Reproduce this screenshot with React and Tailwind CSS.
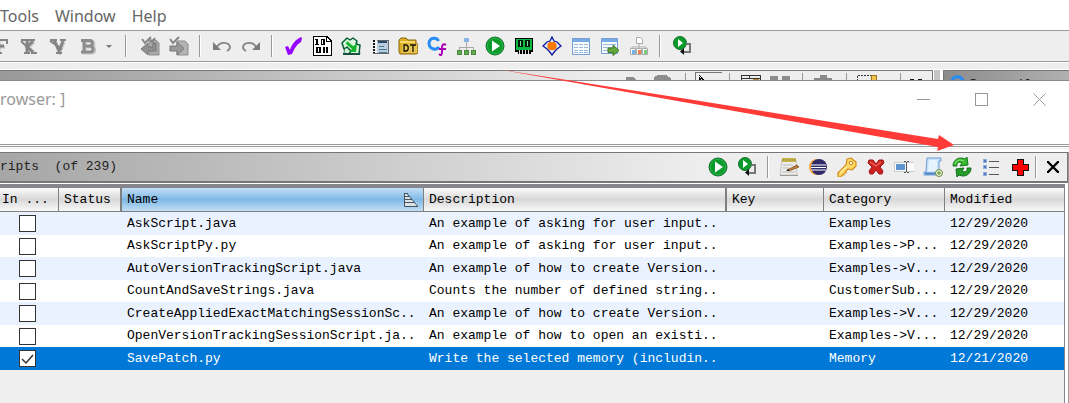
import React from "react";

const Svg = ({ children, crisp }) => (
  <svg
    viewBox="0 0 20 20"
    className="h-5 w-5 shrink-0"
    fill="none"
    aria-hidden="true"
    shapeRendering={crisp ? "crispEdges" : "auto"}
  >
    {children}
  </svg>
);

const LetterIcon = ({ d, serif }) => (
  <Svg>
    <path d={d} stroke="#c4c4c4" strokeWidth="3" transform="translate(1 1)" />
    <path d={d} stroke="#858585" strokeWidth="3" />
    <path d={serif} stroke="#858585" strokeWidth="2" />
  </Svg>
);
const FIcon = () => <LetterIcon d="M8 17V4M8 10h6" serif="M4 4h13v4M4 17h8M3 5l4 4" />;
const KIcon = () => <LetterIcon d="M8 4v13M14 5l-6 6 6 5" serif="M2 4h14M5 17h6M12 17h6M2 5l5 5" />;
const VIcon = () => <LetterIcon d="M6 4l5 11 4-10" serif="M2 4h7M12 4h6M8 17h6M2 5l12 8" />;
const BIcon = () => (
  <Svg>
    <path d="M4 4.500h9c4 0 4 5 0 5.500h-5 5c5 0 5 6 0 6H4M7 4v12" stroke="#c6c6c6" strokeWidth="3" transform="translate(1 1)" />
    <path d="M4 4.500h9c3 0 3 5 0 5.500H8h5c4 0 4 6 0 6H4M7 4v12" stroke="#8d8d8d" strokeWidth="3" />
  </Svg>
);
const PrevPatch = () => (
  <Svg>
    <path d="M9 4h7l3 3v12H9z" fill="#aaa" stroke="#8d8d8d" />
    <path d="M1 13l7-6v4h5V7h3v8H8v4z" fill="#909090" stroke="#777" />
    <path d="M2 3l3 4 6-6M10 4l2 2 3-4" stroke="#858585" strokeWidth="2" />
  </Svg>
);
const NextPatch = () => (
  <Svg>
    <path d="M8 5h8l3 3v11H8z" fill="#b3b3b3" stroke="#8d8d8d" />
    <path d="M1 10h7V6l7 6.500L8 19v-4H1z" fill="#999" stroke="#777" />
    <path d="M1 3l3 4 6-6" stroke="#858585" strokeWidth="2" />
  </Svg>
);
const UndoIcon = () => (
  <Svg>
    <path d="M5 11c3-6 12-5 13 0 0 2-1 3-3 4" stroke="#858585" strokeWidth="1.800" />
    <path d="M1 6v8h8z" fill="#7c7c7c" />
  </Svg>
);
const RedoIcon = () => (
  <Svg>
    <path d="M15 11C12 5 3 6 2 11c0 2 1 3 3 4" stroke="#858585" strokeWidth="1.800" />
    <path d="M19 6v8h-8z" fill="#7c7c7c" />
  </Svg>
);
const PurpleCheck = () => (
  <Svg>
    <path d="M2 11l3-1 2 4C9 8 12 4 18 1l1 1-1 4c-4 2-7 7-9 12l-4 1z" fill="#9500ff" />
  </Svg>
);
const BinaryIcon = () => (
  <Svg crisp>
    <path d="M1 0h14l5 5v15H1z" fill="#000" />
    <path d="M2 1h12v5h5v13H2z" fill="#fff" />
    <path d="M15 2l3 3h-3z" fill="#fff" />
    <path d="M3 3h3v5h1v1H3V8h1V4H3zM9 3h4v6H9zM4 11h5v6H4zM11 11h2v6h-2zM14 11h2v6h-2z" fill="#000" />
    <path d="M10 4h1v4h-1zM6 12h1v4H6z" fill="#fff" />
  </Svg>
);
const GreenArrow = () => (
  <Svg>
    <path d="M4 8h13l2 10H3z" fill="#d3f2d6" stroke="#3d8c6a" />
    <path d="M1 7l5-5 3 2 3-2 4 3-1 3 4 1-1 9H8l2-3-4-4-3 2z" fill="#d9f7da" stroke="#075c35" strokeWidth="1.500" strokeLinejoin="round" />
    <path d="M6 5l6 5 4-2-1 8H8l3-3-6-5z" fill="#15b52c" />
    <path d="M2 18h17" stroke="#174f40" strokeWidth="2" />
  </Svg>
);
const ListingIcon = () => (
  <Svg crisp>
    <path d="M3 4h15v13H3z" fill="#b9cddd" stroke="#666" />
    <path d="M3 4h4v13H3z" fill="#f4f4f4" />
    <path d="M4 4v13" stroke="#111" strokeWidth="2" strokeDasharray="2 1" />
    <path d="M8 6h9" stroke="#27466b" strokeWidth="2" />
    <path d="M9 10h5M9 13h8M9 16h8" stroke="#4e7891" />
  </Svg>
);
const DataTypeIcon = () => (
  <Svg>
    <path d="M1 16V4l2-2h5l2 2h8v4h2v9l-2 1H2z" fill="#dcae25" stroke="#8b6710" />
    <path d="M2 6h15" stroke="#ffe884" strokeWidth="1.500" />
    <path d="M4 8h15v9H4z" fill="#e6c654" />
    <path d="M6 9v6h2c3 0 3-6 0-6zM12 9h6M15 9v7" stroke="#171200" strokeWidth="1.300" />
  </Svg>
);
const FunctionIcon = () => (
  <Svg>
    <path d="M11.500 5C10 1 3 1 2 7c0 6 7 8 10 4" stroke="#278cf4" strokeWidth="3" />
    <path d="M19 9c-3-2-4 0-4 3v4c0 3-1 4-3 2M12 13h7" stroke="#aa00b5" strokeWidth="2" />
  </Svg>
);
const TreeIcon = () => (
  <Svg crisp>
    <path d="M10 6v5M3 14v-3h14v3M10 11v3" stroke="#aaa" />
    <path d="M8 2h5v4H8z" fill="#8ab5e4" />
    <path d="M1 14h4v4H1zM8 14h4v4H8zM15 14h4v4h-4z" fill="#62a94f" stroke="#488a38" />
  </Svg>
);
const RunIcon = () => (
  <Svg>
    <circle cx="10" cy="10" r="9" fill="#0a9b2b" stroke="#16712c" strokeWidth="1" />
    <circle cx="10" cy="10" r="7.700" stroke="#23b547" />
    <path d="M7 4.500v11l8-5.500z" fill="#fff" />
  </Svg>
);
const ChipIcon = () => (
  <Svg crisp>
    <path d="M1 2h18v14h-2v2H4v-2H1z" fill="#000" />
    <path d="M2 3h16v11H2z" fill="#0bbb46" />
    <path d="M4 4h5v7H4zM11 4h5v7h-5z" fill="#001a08" />
    <path d="M6 5h1v5H6zM13 5h1v5h-1z" fill="#71ef98" />
    <path d="M5 14v4M8 14v4M11 14v4M14 14v4" stroke="#ddd" />
  </Svg>
);
const DiamondIcon = () => (
  <Svg>
    <path d="M10 1l2 4 3 1 4 4-4 3-2 2-3 4-3-4-2-2-4-3 4-4 3-1z" fill="#dceaff" stroke="#111a9c" strokeWidth="1.300" />
    <path d="M7.500 6h5l2 2v4l-2 2h-5l-2-2V8z" fill="#ff7900" />
  </Svg>
);
const SheetIcon = () => (
  <Svg crisp>
    <path d="M1 2h17v16H1z" fill="#f5fbff" stroke="#759fd3" />
    <path d="M2 3h16v3H2z" fill="#78aae6" />
    <path d="M3 8h14M3 11h14M3 14h14M3 16h14" stroke="#9db8d6" />
    <path d="M7 7v10M12 7v10" stroke="#fff" />
  </Svg>
);
const SheetExport = () => (
  <Svg>
    <path d="M1.500 2.500h16v15h-16z" fill="#f5fbff" stroke="#759fd3" />
    <path d="M2 3h15v3H2z" fill="#78aae6" />
    <path d="M3 8.500h13M3 11.500h13M3 14.500h8" stroke="#9db8d6" />
    <path d="M8 12h5V9l6 5.500-6 5v-3H8z" fill="#65a939" stroke="#3e762b" />
  </Svg>
);
const ProgramTree = () => (
  <Svg>
    <path d="M7.500 1.500h4l2 2v4h-6zM10 8v3M3 13v-2h14v2M10 11v2" fill="#fff" stroke="#aaa" />
    <path d="M1.500 12.500h5v6h-5zM7.500 12.500h5v6h-5zM13.500 12.500h5v6h-5z" fill="#fff" stroke="#aaa" />
    <path d="M3 14h3v4H3z" fill="#6cb5ed" />
    <path d="M9 14h3v4H9z" fill="#f17d4d" />
    <path d="M15 14h3v4h-3z" fill="#76cc78" />
  </Svg>
);
const RerunIcon = () => (
  <Svg>
    <circle cx="8" cy="7" r="6.500" fill="#0a9b2b" stroke="#16712c" />
    <path d="M6 3v8l5-4z" fill="#fff" />
    <path d="M14 8h4v8h-7" stroke="#777" strokeWidth="2" />
    <path d="M12 12v7l-4-3.500z" fill="#111" />
  </Svg>
);
const EditIcon = () => (
  <Svg>
    <path d="M3 3h14l1 15H1z" fill="#ececea" stroke="#c4c4be" />
    <path d="M3 1h14v4H3z" fill="#c6b64b" />
    <path d="M4 2v2M7 2v2M10 2v2M13 2v2M16 2v2" stroke="#968b3d" />
    <path d="M4 8h10M4 11h6M3 15h13" stroke="#bbb" />
    <path d="M1 18.500h18" stroke="#999" />
    <path d="M8 13l10-5 2 2-10 4z" fill="#c37e37" stroke="#71441d" strokeWidth=".7" />
    <path d="M7 14l3-2v2z" fill="#222" />
  </Svg>
);
const EclipseIcon = () => (
  <Svg>
    <circle cx="9" cy="10" r="8" fill="#f5a036" />
    <circle cx="11" cy="10" r="8" fill="#302b68" />
    <path d="M3 8h15M3 10.500h15M3 13h15" stroke="#fff" strokeWidth="1.200" />
  </Svg>
);
const KeyIcon = () => (
  <Svg>
    <path
      d="M10 2l4-1 5 4v4l-4 4-4-1-2 2v2H7v2H5l-1 2H1v-4l8-8z"
      fill="#ffd765"
      stroke="#d58b16"
      strokeWidth="1.200"
      strokeLinejoin="round"
    />
    <path d="M3 16l7-7" stroke="#fff0a2" strokeWidth="1.300" />
    <circle cx="14" cy="6" r="1.700" fill="#fff" stroke="#c98317" />
  </Svg>
);
const DeleteIcon = () => (
  <Svg>
    <path
      d="M3 3h4l3 4 3-4h4l1 3-4 4 3 4-1 3h-3l-3-4-3 4H4l-1-3 3-4-4-4z"
      fill="#cf2020"
      stroke="#9c1818"
      strokeLinejoin="round"
    />
    <path d="M4 5l6 4 5-4" stroke="#ed6557" strokeWidth="1.200" />
  </Svg>
);
const RenameIcon = () => (
  <Svg crisp>
    <path d="M0 5h20v9H0z" fill="#fafafa" stroke="#ccc" />
    <path d="M2 7h9v6H2z" fill="#5e94d2" />
    <path d="M10 4h2v1h-2zM13 4h2v1h-2zM12 5h1v10h-1zM10 15h2v1h-2zM13 15h2v1h-2z" fill="#555" />
  </Svg>
);
const NewScript = () => (
  <Svg>
    <path d="M4 1h14v3h-2v14H1v-3h2z" fill="#c9e4ff" stroke="#699cd5" strokeLinejoin="round" />
    <path d="M6 3h8v11H5z" fill="#e7f4ff" />
    <path d="M2 16.500h12" stroke="#4781bd" strokeWidth="2" />
    <circle cx="16" cy="16" r="3.500" fill="#e9f6d7" stroke="#668b38" />
    <path d="M16 14v4M14 16h4" stroke="#568b24" />
  </Svg>
);
const RefreshIcon = () => (
  <Svg>
    <path
      d="M1 9C1 3 7-1 13 2l2-2 1 8-8 1 2-3C7 4 4 6 5 9z"
      fill="#35b62e"
      stroke="#16791e"
      strokeLinejoin="round"
    />
    <path
      d="M19 11c0 6-6 10-12 7l-2 2-1-8 8-1-2 3c3 2 6 0 5-3z"
      fill="#249e26"
      stroke="#126d1b"
      strokeLinejoin="round"
    />
    <path d="M3 7c1-4 5-5 9-3" stroke="#8ce274" strokeWidth="1.200" />
  </Svg>
);
const BulletsIcon = () => (
  <Svg crisp>
    <path d="M2 2h4v4H2zM2 8h4v4H2zM2 15h4v4H2z" fill="#8eafe1" />
    <path d="M3 3h2v2H3zM3 9h2v2H3zM3 16h2v2H3z" fill="#5779b9" />
    <path d="M8 4h10v1H8zM8 10h10v1H8zM8 17h10v1H8z" fill="#555" />
  </Svg>
);
const RedCross = () => (
  <Svg crisp>
    <path d="M7 2h6v5h5v6h-5v5H7v-5H2V7h5z" fill="#f00" stroke="#111" />
  </Svg>
);
const CloseBold = () => (
  <Svg>
    <path d="M5 5l10 10M15 5L5 15" stroke="#000" strokeWidth="2.400" />
    <path d="M4 15h2M4 5h2M14 5h2M14 15h2" stroke="#000" strokeWidth="2" />
  </Svg>
);

const mainIcons = [
  ["Analyze", PurpleCheck],
  ["Bytes", BinaryIcon],
  ["Import", GreenArrow],
  ["Listing", ListingIcon],
  ["Data types", DataTypeIcon],
  ["Functions", FunctionIcon],
  ["Call tree", TreeIcon],
  ["Script manager", RunIcon],
  ["Memory map", ChipIcon],
  ["Relocations", DiamondIcon],
  ["Symbol table", SheetIcon],
  ["Symbol references", SheetExport],
  ["Program tree", ProgramTree],
];

const scriptIcons = [
  ["Edit script", EditIcon],
  ["Edit in Eclipse", EclipseIcon],
  ["Assign key", KeyIcon],
  ["Delete script", DeleteIcon],
  ["Rename script", RenameIcon],
  ["New script", NewScript],
  ["Refresh list", RefreshIcon],
  ["Script directories", BulletsIcon],
  ["Help", RedCross],
];

const rows = [
  ["AskScript.java", "An example of asking for user input..", "Examples", "12/29/2020"],
  ["AskScriptPy.py", "An example of asking for user input..", "Examples->P...", "12/29/2020"],
  ["AutoVersionTrackingScript.java", "An example of how to create Version..", "Examples->V...", "12/29/2020"],
  ["CountAndSaveStrings.java", "Counts the number of defined string..", "CustomerSub...", "12/29/2020"],
  ["CreateAppliedExactMatchingSessionSc..", "An example of how to create Version..", "Examples->V...", "12/29/2020"],
  ["OpenVersionTrackingSessionScript.ja..", "An example of how to open an existi..", "Examples->V...", "12/29/2020"],
  ["SavePatch.py", "Write the selected memory (includin..", "Memory", "12/21/2020"],
];

function Tool({ label, icon: Icon, className = "w-[29px]" }) {
  return (
    <button type="button" aria-label={label} className={`flex h-7 shrink-0 items-center justify-center ${className}`}>
      <Icon />
    </button>
  );
}

function Sep({ className = "w-3.5" }) {
  return (
    <span className={`flex shrink-0 justify-center ${className}`}>
      <span className="h-[22px] w-0.5 border-r border-l border-r-white border-l-[#999]" />
    </span>
  );
}

function MenuBar() {
  return (
    <nav className="flex h-[30px] items-center gap-4 pt-0.5 font-['Noto_Sans','Open_Sans',sans-serif] text-base text-[#666]">
      <button type="button">Tools</button>
      <button type="button">Window</button>
      <button type="button">Help</button>
    </nav>
  );
}

function MainToolbar() {
  return (
    <div className="overflow-hidden border-y border-[#9a9a9a] bg-[#eee]">
      <div className="-ml-[15px] flex h-[30px] items-center">
        <Tool label="Next function" icon={FIcon} />
        <Tool label="Next non-function" icon={KIcon} />
        <Tool label="Next value" icon={VIcon} />
        <Tool label="Next bookmark" icon={BIcon} />
        <button type="button" aria-label="Bookmark options" className="flex w-4 shrink-0 justify-center">
          <svg viewBox="0 0 6 3" className="h-[3px] w-1.5" aria-hidden="true">
            <path d="M0 0h6L3 3z" fill="#777" />
          </svg>
        </button>
        <Sep className="w-[18px]" />
        <Tool label="Previous change" icon={PrevPatch} />
        <Tool label="Next change" icon={NextPatch} />
        <Sep />
        <Tool label="Undo" icon={UndoIcon} />
        <Tool label="Redo" icon={RedoIcon} />
        <Sep />
        <div className="grid w-[374px] shrink-0 grid-cols-13">
          {mainIcons.map(([label, icon]) => (
            <Tool key={label} label={label} icon={icon} className="w-full" />
          ))}
        </div>
        <Sep />
        <Tool label="Rerun last script" icon={RerunIcon} />
      </div>
    </div>
  );
}

function PanelStrip() {
  return (
    <div className="flex h-[11px] overflow-hidden border-b border-[#8a8a8a]">
      <div className="flex h-[11px] flex-1 justify-end overflow-hidden border-t border-r border-[#777] bg-linear-to-r from-[#999] to-[#eee] to-65%">
        <svg viewBox="0 0 313 10" className="h-2.5 w-[313px] shrink-0" fill="none" aria-hidden="true" shapeRendering="crispEdges">
          <path d="M7 6h8l3 4H7z" fill="#8d8d8d" />
          <path d="M35 6l4-2h8l5 3v3H35z" fill="#8d8d8d" />
          <path d="M66.500 2v8M110.500 2v8M183.500 2v8M227.500 2v8M281.500 2v8" stroke="#999" />
          <path d="M76.500 10V1.500H103" stroke="#777" />
          <path d="M80 5v5l2-2zM80 4l6 6h-2z" fill="#000" />
          <path d="M122.500 10V4.500h19V10M123 7.500h18M130 4v4" stroke="#333" />
          <path d="M134 8h6v2h-6z" fill="#b28538" />
          <path d="M151 5h8v5h-8zM163 5h8v5h-8z" fill="#8d8d8d" />
          <path d="M201 4h7v3h5v3h-18V7h6z" fill="#888" />
          <path d="M238.500 10V4.500H253" stroke="#333" strokeDasharray="2 1" />
          <path d="M252 4h5v6h-5z" fill="#f2c14e" stroke="#a4741b" />
          <path d="M291 8h4v2h-4zM299 8h4v2h-4z" fill="#111" />
        </svg>
      </div>
      <div className="mr-[3px] ml-px w-[6px] bg-[#c4c4c4]" />
      <div className="flex w-[126px] items-start gap-1 border-t border-l border-[#777] bg-linear-to-r from-[#8c8c8c] to-[#b0b0b0] pl-1.5">
        <svg viewBox="0 0 16 16" className="mt-1 h-4 w-4 shrink-0" fill="none" aria-hidden="true">
          <path d="M13 6C11 0 2 0 2 8s8 7 11 3" stroke="#278cf4" strokeWidth="3" />
        </svg>
        <span className="pt-1.5 font-['Liberation_Mono',monospace] text-[13px] leading-4 text-[#222]">Decompiler</span>
      </div>
    </div>
  );
}

function DialogTitle() {
  return (
    <header className="flex h-[63px] items-start justify-between bg-white">
      <h1 className="pt-1.5 font-['Noto_Sans','Open_Sans',sans-serif] text-base leading-6 text-[#999]">rowser: ]</h1>
      <div className="flex h-9 items-center">
        <button type="button" aria-label="Minimize" className="flex w-[58px] justify-center">
          <svg viewBox="0 0 13 13" className="h-[13px] w-[13px]" fill="none" aria-hidden="true">
            <path d="M0 6.500h13" stroke="#999" />
          </svg>
        </button>
        <button type="button" aria-label="Maximize" className="flex w-[58px] justify-center">
          <svg viewBox="0 0 13 13" className="h-[13px] w-[13px]" fill="none" aria-hidden="true" shapeRendering="crispEdges">
            <path d="M.5.5h12v12H.5z" stroke="#999" />
          </svg>
        </button>
        <button type="button" aria-label="Close" className="flex w-[59px] justify-center">
          <svg viewBox="0 0 13 13" className="h-[13px] w-[13px]" fill="none" aria-hidden="true">
            <path d="M.5.5l12 12M12.500.5l-12 12" stroke="#999" />
          </svg>
        </button>
      </div>
    </header>
  );
}

function ScriptHeader() {
  return (
    <div className="flex h-[31px] items-stretch border-t border-r border-b-2 border-[#777]">
      <h2 className="flex flex-1 items-center bg-linear-to-r from-[#a6a6a6] to-[#eee] font-['Liberation_Mono',monospace] text-[13px] whitespace-pre text-[#222]">
        {"ripts  (of 239)"}
      </h2>
      <div className="flex items-center bg-[#eee]">
        <div className="grid w-[58px] grid-cols-2">
          <Tool label="Run script" icon={RunIcon} className="w-full" />
          <Tool label="Run last script" icon={RerunIcon} className="w-full" />
        </div>
        <Sep />
        <div className="grid w-[259px] grid-cols-9">
          {scriptIcons.map(([label, icon]) => (
            <Tool key={label} label={label} icon={icon} className="w-full" />
          ))}
        </div>
        <Sep className="w-1" />
        <Tool label="Close panel" icon={CloseBold} />
      </div>
    </div>
  );
}

const grey = "bg-linear-to-b from-[#fafafa] via-[#d8d8d8] to-[#f8f8f8]";
const th = "border-b border-[#808080] pl-[5px] text-left font-normal overflow-hidden whitespace-nowrap";

function ScriptTable() {
  return (
    <table className="w-full table-fixed border-separate border-spacing-0 font-['Liberation_Mono',monospace] text-[13px] leading-4 text-black">
      <colgroup>
        <col className="w-[59px]" />
        <col className="w-[63px]" />
        <col className="w-[302px]" />
        <col />
        <col className="w-[97px]" />
        <col className="w-[121px]" />
        <col className="w-[119px]" />
      </colgroup>
      <thead>
        <tr className="h-6">
          <th className={`border-r border-b border-[#808080] pl-0.5 text-left font-normal whitespace-nowrap ${grey}`}>In ...</th>
          <th className={`border-r-2 ${th} ${grey}`}>Status</th>
          <th className={`border-r ${th} bg-linear-to-b from-[#c3def3] via-[#7db9e8] to-[#c3def3]`}>
            <span className="flex items-center justify-between pr-1">
              Name
              <svg viewBox="0 0 16 16" className="h-4 w-4" fill="none" aria-hidden="true">
                <path d="M1.500 1.500h3v3h3v3h3v3h3v4h-12z" fill="#dce3e8" />
                <path d="M1.500 1v13.500H15M2 1.500h3M2 4.500h5M2 7.500h7M2 10.500h9M4.500 2l10 12" stroke="#46535e" />
              </svg>
            </span>
          </th>
          <th className={`border-r-2 ${th} ${grey}`}>Description</th>
          <th className={`border-r ${th} ${grey}`}>Key</th>
          <th className={`border-r ${th} ${grey}`}>Category</th>
          <th className={`${th} ${grey}`}>Modified</th>
        </tr>
      </thead>
      <tbody>
        {rows.map(([name, description, category, modified], i) => {
          const selected = name === "SavePatch.py";
          const odd = i % 2 === 0;
          return (
            <tr
              key={name}
              className={`whitespace-nowrap ${odd ? "h-[23px]" : "h-[22px]"} ${
                selected ? "bg-[#0078d7] text-white" : odd ? "bg-[#ebf2ff]" : "bg-white"
              }`}
            >
              <td className="p-0 pl-[19px]">
                <label className="grid h-[17px] w-[17px]">
                  <input
                    type="checkbox"
                    defaultChecked={selected}
                    aria-label={`${name} in tool`}
                    className="peer col-start-1 row-start-1 h-[17px] w-[17px] appearance-none border border-[#333] bg-white"
                  />
                  <svg
                    viewBox="0 0 17 17"
                    className="pointer-events-none invisible col-start-1 row-start-1 h-[17px] w-[17px] peer-checked:visible"
                    fill="none"
                    aria-hidden="true"
                  >
                    <path d="M3 9l4 4 7-8" stroke="#333" strokeWidth="1.500" />
                  </svg>
                </label>
              </td>
              <td className="p-0" />
              <td className="p-0 pl-[5px]">{name}</td>
              <td className="p-0 pl-[5px]">{description}</td>
              <td className="p-0" />
              <td className="p-0 pl-[5px]">{category}</td>
              <td className="p-0 pl-[5px]">{modified}</td>
            </tr>
          );
        })}
      </tbody>
    </table>
  );
}

function Arrow() {
  return (
    <svg
      viewBox="0 0 458 84"
      className="pointer-events-none absolute top-[68px] left-[496px] h-[84px] w-[458px]"
      aria-hidden="true"
    >
      <path d="M1 1l203 32 238 38 1-4 15 10-17 6 1-4L204 37z" fill="#ff3b38" />
    </svg>
  );
}

export default function App() {
  return (
    <main className="relative flex min-h-screen flex-col overflow-hidden bg-white">
      <MenuBar />
      <MainToolbar />
      <div className="my-px h-1.5 bg-[#eee]" />
      <PanelStrip />
      <section className="flex flex-1 flex-col">
        <DialogTitle />
        <div className="h-[3px] border-y border-[#999]" />
        <div className="mt-px mb-[3px] h-px bg-[#eee]" />
        <div className="flex flex-1 flex-col border-r border-[#999]">
          <ScriptHeader />
          <div className="mt-px mr-[3px] flex flex-1 flex-col border-t-4 border-r border-[#85858b] bg-[#efefef]">
            <ScriptTable />
          </div>
        </div>
      </section>
      <Arrow />
    </main>
  );
}
